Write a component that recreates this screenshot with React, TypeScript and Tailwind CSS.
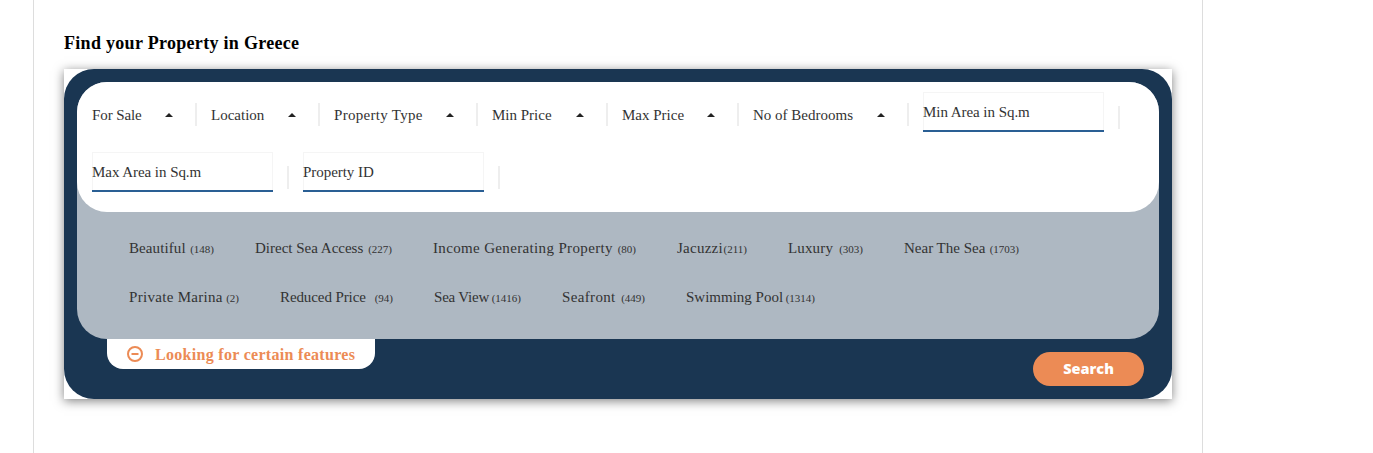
import React from 'react';

const font = "[font-family:'Liberation_Serif',serif]";

function Caret() {
  return <span className="block h-0 w-0 border-x-[4px] border-b-[4px] border-x-transparent border-b-[#222]" />;
}

function Divider() {
  return <span className="block h-[23px] w-[2px] bg-[#eeeeee]" />;
}

function SelectBox({ label, textClass }: { label: string; textClass: string }) {
  return (
    <div className="mt-[11px] flex h-[23px] items-center">
      <span className={`${textClass} mt-[2px] whitespace-nowrap text-[15px] leading-[23px] text-[#333]`}>{label}</span>
      <span className="ml-[23px] mr-[22px]">
        <Caret />
      </span>
      <Divider />
      <span className="w-[14px]" />
    </div>
  );
}

function AreaInput({ label }: { label: string }) {
  return (
    <div className="relative flex h-[40px] w-[181px] shrink-0 items-center border border-b-0 border-[#f5f5f5]">
      <span className="-ml-px -mt-px whitespace-nowrap text-[15px] tracking-[-0.05px] text-[#333]">{label}</span>
      <span className="absolute -left-px -right-px bottom-0 h-[2px] bg-[#2a5f94]" />
    </div>
  );
}

function Feature({ name, count, boxClass }: { name: string; count: number; boxClass: string }) {
  return (
    <span className={`${boxClass} flex items-baseline justify-between whitespace-nowrap text-[#333]`}>
      <span className="text-[15px]">{name}</span>
      <span className="text-[11px] tracking-normal">({count})</span>
    </span>
  );
}

export default function App() {
  return (
    <div className={`${font} min-h-[453px] bg-white`}>
      <div className="ml-[33px] h-[453px] w-[1170px] border-x border-[#dddddd] pl-[30px] pt-[33px]">
        <h2 className="text-[18px] font-bold leading-[20px] tracking-[0.3px] text-black">Find your Property in Greece</h2>
        <div className="mt-[16px] h-[330px] w-[1108px] bg-white shadow-[0_2px_10px_rgba(0,0,0,0.5)]">
          <div className="flex h-full flex-col rounded-[30px] bg-[#1a3652] p-[13px]">
            <div className="h-[257px] rounded-[30px] bg-[#aeb8c2]">
              <div className="h-[130px] rounded-[30px] bg-white px-[15px] pt-[10px]">
                <div className="flex h-[60px] items-start">
                  <SelectBox label="For Sale" textClass="w-[50px] tracking-[-0.1px]" />
                  <SelectBox label="Location" textClass="w-[54px]" />
                  <SelectBox label="Property Type" textClass="w-[89px] tracking-[0.3px]" />
                  <SelectBox label="Min Price" textClass="w-[61px]" />
                  <SelectBox label="Max Price" textClass="w-[62px]" />
                  <SelectBox label="No of Bedrooms" textClass="w-[101px]" />
                  <AreaInput label="Min Area in Sq.m" />
                  <span className="ml-[14px] mt-[14px]"><Divider /></span>
                </div>
                <div className="flex h-[40px] items-start">
                  <AreaInput label="Max Area in Sq.m" />
                  <span className="mx-[14px] mt-[14px]"><Divider /></span>
                  <AreaInput label="Property ID" />
                  <span className="ml-[14px] mt-[14px]"><Divider /></span>
                </div>
              </div>
              <div className="px-[52px] pt-[12px]">
                <div className="flex h-[49px] items-center gap-[41px]">
                  <Feature name="Beautiful" count={148} boxClass="w-[85px] tracking-[0.1px]" />
                  <Feature name="Direct Sea Access" count={227} boxClass="w-[137px]" />
                  <Feature name="Income Generating Property" count={80} boxClass="w-[203px] tracking-[0.35px]" />
                  <Feature name="Jacuzzi" count={211} boxClass="w-[70px] tracking-[0.25px]" />
                  <Feature name="Luxury" count={303} boxClass="w-[75px] tracking-[0.15px]" />
                  <Feature name="Near The Sea" count={1703} boxClass="w-[115px]" />
                </div>
                <div className="flex h-[49px] items-center gap-[41px]">
                  <Feature name="Private Marina" count={2} boxClass="w-[110px] tracking-[0.3px]" />
                  <Feature name="Reduced Price" count={94} boxClass="w-[113px] tracking-[-0.1px]" />
                  <Feature name="Sea View" count={1416} boxClass="w-[87px] tracking-[-0.2px]" />
                  <Feature name="Seafront" count={449} boxClass="w-[83px] tracking-[0.35px]" />
                  <Feature name="Swimming Pool" count={1314} boxClass="w-[129px]" />
                </div>
              </div>
            </div>
            <div className="flex items-start justify-between pl-[30px] pr-[15px]">
              <div className="flex h-[30px] w-[268px] items-center rounded-b-[16px] bg-white pl-[20px]">
                <svg width="16" height="16" viewBox="0 0 16 16" fill="none" stroke="#ec8b55" strokeWidth="2">
                  <circle cx="8" cy="8" r="7" />
                  <path d="M4.5 8h7" />
                </svg>
                <span className="ml-[12px] mt-[2px] whitespace-nowrap text-[16px] font-bold tracking-[0.3px] text-[#ec8b55]">Looking for certain features</span>
              </div>
              <button className="mt-[13px] h-[34px] w-[111px] rounded-[17px] bg-[#ec8b55] text-[14.5px] font-extrabold text-white [font-family:'Open_Sans',sans-serif]">
                Search
              </button>
            </div>
          </div>
        </div>
      </div>
    </div>
  );
}
